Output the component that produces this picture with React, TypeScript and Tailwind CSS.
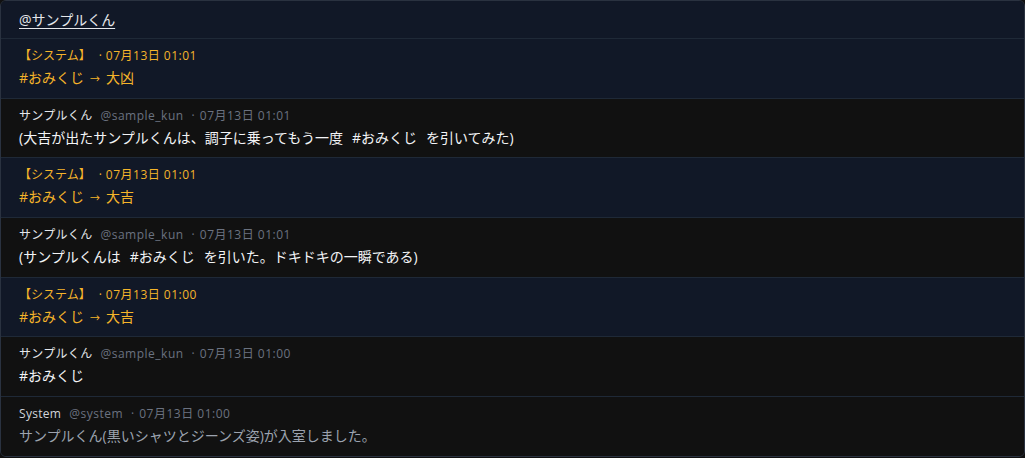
const messages = [
  { system: true, time: "07月13日 01:01", parts: ["#おみくじ", "→", "大凶"] },
  { name: "サンプルくん", handle: "@sample_kun", time: "07月13日 01:01", parts: ["(大吉が出たサンプルくんは、調子に乗ってもう一度", "#おみくじ", "を引いてみた)"] },
  { system: true, time: "07月13日 01:01", parts: ["#おみくじ", "→", "大吉"] },
  { name: "サンプルくん", handle: "@sample_kun", time: "07月13日 01:01", parts: ["(サンプルくんは", "#おみくじ", "を引いた。ドキドキの一瞬である)"] },
  { system: true, time: "07月13日 01:00", parts: ["#おみくじ", "→", "大吉"] },
  { name: "サンプルくん", handle: "@sample_kun", time: "07月13日 01:00", parts: ["#おみくじ"] },
  { name: "System", handle: "@system", time: "07月13日 01:00", parts: ["サンプルくん(黒いシャツとジーンズ姿)が入室しました。"], muted: true },
];

function Body({ parts }: { parts: string[] }) {
  return (
    <>
      {parts.map((p, i) =>
        p === "→" ? (
          <span key={i} className="mx-[6px] text-[10px]">→</span>
        ) : p.startsWith("#") && i > 0 ? (
          <span key={i} className="mx-[9px]">{p}</span>
        ) : (
          <span key={i}>{p}</span>
        )
      )}
    </>
  );
}

function Row({ m }: { m: (typeof messages)[number] }) {
  if (m.system) {
    return (
      <div className="h-[59.7px] border-t border-[#1f2937] bg-[#111827] px-[18px] pt-[8px]">
        <div className="flex items-center text-[12px] leading-[18px] text-[#f5b42a]">
          <span>【システム】</span>
          <span className="ml-[8px]">·</span>
          <span className="ml-[4px] tracking-[0.5px]">{m.time}</span>
        </div>
        <div className="mt-[3px] text-[14px] leading-[20px] text-[#f5b42a]">
          <Body parts={m.parts} />
        </div>
      </div>
    );
  }
  return (
    <div className="h-[59.7px] border-t border-[#1f2937] bg-[#111111] px-[18px] pt-[8px]">
      <div className="flex items-center text-[12px] leading-[18px]">
        <span className={`tracking-[0.3px] ${m.muted ? "text-[#d1d5db]" : "text-[#e5e7eb]"}`}>{m.name}</span>
        <span className="ml-[8px] tracking-[0.5px] text-[#6b7280]">{m.handle}</span>
        <span className="ml-[8px] text-[#6b7280]">·</span>
        <span className="ml-[5px] tracking-[0.5px] text-[#6b7280]">{m.time}</span>
      </div>
      <div className={`mt-[3px] text-[14px] leading-[20px] ${m.muted ? "text-[#9ca3af]" : "text-[#f3f4f6]"}`}>
        <Body parts={m.parts} />
      </div>
    </div>
  );
}

export default function App() {
  return (
    <div
      className="h-[458px] w-[1025px] bg-[#111111]"
      style={{ fontFamily: '"Open Sans", "Noto Sans CJK JP", sans-serif' }}
    >
      <div className="h-[457px] overflow-hidden rounded-[6px] border border-[#2a3240] bg-[#111111]">
        <div className="flex h-[37px] items-center bg-[#111827] px-[18px]">
          <span className="text-[14px] text-[#e5e7eb] underline underline-offset-[3px]">@サンプルくん</span>
        </div>
        {messages.map((m, i) => (
          <Row key={i} m={m} />
        ))}
      </div>
    </div>
  );
}
